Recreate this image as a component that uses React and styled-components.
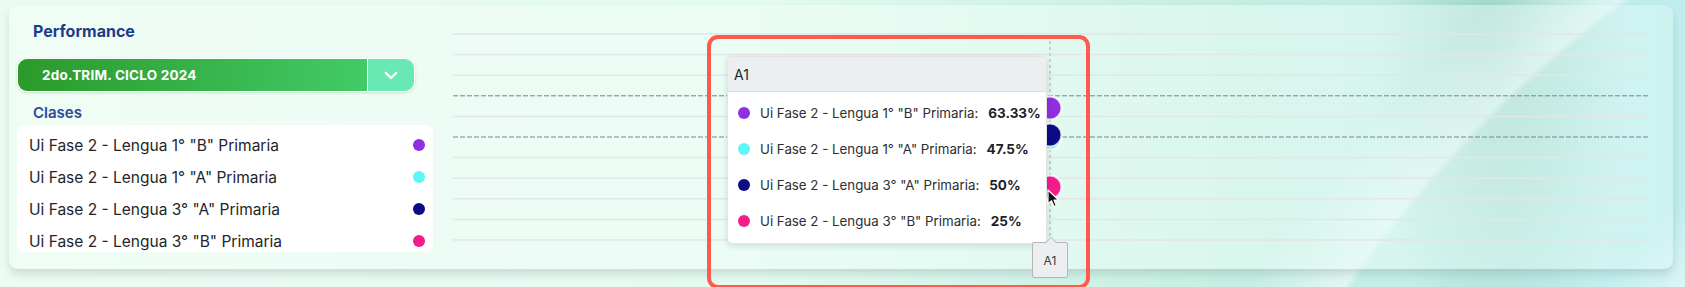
import React from "react";
import styled, { createGlobalStyle } from "styled-components";

const GlobalStyle = createGlobalStyle`
  html, body {
    margin: 0;
    padding: 0;
  }
  body {
    font-family: Inter, "Noto Sans", "Liberation Sans", sans-serif;
    color: #1f2328;
  }
`;

const Page = styled.div`
  width: 1685px;
  height: 287px;
  box-sizing: border-box;
  padding: 5px 12px 0 9px;
  overflow: hidden;
  background:
    radial-gradient(circle at 2350px 980px, rgba(255, 255, 255, 0) 1215px, rgba(255, 255, 255, 0.5) 1222px, rgba(255, 255, 255, 0) 1300px),
    radial-gradient(circle at 2300px 900px, rgba(255, 255, 255, 0) 860px, rgba(255, 255, 255, 0.45) 866px, rgba(255, 255, 255, 0) 930px),
    radial-gradient(circle at 2200px 850px, rgba(255, 255, 255, 0) 690px, rgba(255, 255, 255, 0.4) 696px, rgba(255, 255, 255, 0) 760px),
    radial-gradient(ellipse 170px 420px at 1500px 60px, rgba(110, 180, 150, 0.45), rgba(110, 180, 150, 0) 75%),
    linear-gradient(90deg, #ecfcf3 0%, #e4fbf0 45%, #c6efe2 72%, #bfeeee 100%);
`;

const Card = styled.div`
  display: flex;
  height: 264px;
  box-sizing: border-box;
  padding: 0 25px 0 8px;
  gap: 20px;
  border-radius: 9px;
  background: linear-gradient(90deg, rgba(240, 253, 245, 0.85) 0%, rgba(236, 253, 246, 0.65) 55%, rgba(230, 250, 248, 0.4) 100%);
  box-shadow: 0 5px 8px rgba(120, 140, 150, 0.28);
`;

const Sidebar = styled.div`
  width: 416px;
  flex: none;
  display: flex;
  flex-direction: column;
  padding-top: 16px;
`;

const Title = styled.div`
  padding-left: 16px;
  font-size: 16px;
  font-weight: 700;
  color: #1e3a8a;
  line-height: 20px;
`;

const Select = styled.div`
  margin-top: 17px;
  height: 34px;
  width: 398px;
  display: flex;
  box-sizing: border-box;
  border: 1px solid #ffffff;
  border-radius: 10px;
  overflow: hidden;
  box-shadow: 0 1px 3px rgba(40, 120, 60, 0.2);
`;

const SelectValue = styled.div`
  flex: 1;
  display: flex;
  align-items: center;
  padding-left: 24px;
  background: linear-gradient(90deg, #2b9a29 0%, #36b24a 50%, #42cb66 100%);
  color: #ffffff;
  font-size: 13.5px;
  font-weight: 700;
  letter-spacing: 0.2px;
`;

const SelectToggle = styled.div`
  width: 46px;
  display: flex;
  align-items: center;
  justify-content: center;
  border-left: 1px solid #ffffff;
  background: #68e9b3;
`;

const Subtitle = styled.div`
  margin-top: 12px;
  padding-left: 16px;
  font-size: 15px;
  font-weight: 600;
  color: #2a4a9b;
  line-height: 18px;
`;

const Legend = styled.div`
  margin-top: 3px;
  background: #ffffff;
  border-radius: 8px;
  padding: 4px 0 0;
  height: 127px;
  box-sizing: border-box;
  overflow: hidden;
`;

const LegendRow = styled.div`
  height: 32px;
  display: flex;
  align-items: center;
  justify-content: space-between;
  padding: 0 8px 0 12px;
  font-size: 15.5px;
  color: #23262b;
`;

const Dot = styled.span`
  width: 12px;
  height: 12px;
  border-radius: 50%;
  background: ${(p) => p.$color};
  flex: none;
`;

const ChartArea = styled.div`
  flex: 1;
  position: relative;
`;

const ChartSvg = styled.svg`
  display: block;
`;

const Tooltip = styled.div`
  position: absolute;
  left: 274px;
  top: 51px;
  width: 318px;
  background: #ffffff;
  border: 1px solid #e3e3e3;
  border-radius: 5px;
  box-shadow: 0 2px 6px rgba(0, 0, 0, 0.12);
  overflow: hidden;
  font-size: 13.3px;
`;

const TooltipHeader = styled.div`
  height: 34px;
  display: flex;
  align-items: center;
  padding-left: 6px;
  background: #eceff1;
  border-bottom: 1px solid #dddddd;
  color: #222;
  font-size: 14px;
`;

const TooltipBody = styled.div`
  padding: 3px 0 4px;
`;

const TooltipRow = styled.div`
  height: 36px;
  display: flex;
  align-items: center;
  padding-left: 10px;
  color: #2b2e33;
  white-space: nowrap;
`;

const TooltipLabel = styled.span`
  margin-left: 10px;
`;

const TooltipValue = styled.b`
  margin-left: 10px;
  font-size: 13.5px;
  font-weight: 700;
  color: #1f2328;
`;

const AxisLabel = styled.div`
  position: absolute;
  left: 579px;
  top: 237px;
  width: 36px;
  height: 36px;
  box-sizing: border-box;
  display: flex;
  align-items: center;
  justify-content: center;
  background: #eceff1;
  border: 1px solid #b6b6b6;
  border-radius: 2px;
  font-size: 12px;
  color: #373d3f;

  &::before {
    content: "";
    position: absolute;
    top: -6px;
    left: 12px;
    border: 6px solid transparent;
    border-top: 0;
    border-bottom-color: #b6b6b6;
  }
  &::after {
    content: "";
    position: absolute;
    top: -5px;
    left: 13px;
    border: 5px solid transparent;
    border-top: 0;
    border-bottom-color: #eceff1;
  }
`;

const Highlight = styled.div`
  position: absolute;
  left: 254px;
  top: 30px;
  width: 383px;
  height: 254px;
  box-sizing: border-box;
  border: 4px solid #ff5b4d;
  border-radius: 11px;
  pointer-events: none;
`;

const Cursor = styled.svg`
  position: absolute;
  left: 594px;
  top: 184px;
`;

const series = [
  { name: 'Ui Fase 2 - Lengua 1° "B" Primaria', color: "#8f2fe0", value: "63.33%", cy: 103 },
  { name: 'Ui Fase 2 - Lengua 1° "A" Primaria', color: "#5ef6f6", value: "47.5%", cy: 133 },
  { name: 'Ui Fase 2 - Lengua 3° "A" Primaria', color: "#0c0b87", value: "50%", cy: 130 },
  { name: 'Ui Fase 2 - Lengua 3° "B" Primaria', color: "#f41b8c", value: "25%", cy: 182 },
];

const gridLines = Array.from({ length: 11 }, (_, i) => 29 + i * 20.6);
const dashed = [3, 5];

const ChevronDown = () => (
  <svg width="18" height="18" viewBox="0 0 24 24" fill="none" stroke="#ffffff" strokeWidth="3" strokeLinecap="round" strokeLinejoin="round">
    <path d="M5 9l7 7 7-7" />
  </svg>
);

const drawOrder = [1, 2, 0, 3];

const App = () => {
  return (
    <>
      <GlobalStyle />
      <Page>
        <Card>
          <Sidebar>
            <Title>Performance</Title>
            <Select>
              <SelectValue>2do.TRIM. CICLO 2024</SelectValue>
              <SelectToggle>
                <ChevronDown />
              </SelectToggle>
            </Select>
            <Subtitle>Clases</Subtitle>
            <Legend>
              {series.map((s) => (
                <LegendRow key={s.name}>
                  <span>{s.name}</span>
                  <Dot $color={s.color} />
                </LegendRow>
              ))}
            </Legend>
          </Sidebar>
          <ChartArea>
            <ChartSvg width="1195" height="264">
              {gridLines.map((y, i) =>
                dashed.includes(i) ? (
                  <line key={i} x1="0" x2="1195" y1={y} y2={y} stroke="#7d8488" strokeWidth="1" strokeDasharray="5 2" />
                ) : (
                  <line key={i} x1="0" x2="1195" y1={y} y2={y} stroke="#e2e6e4" strokeWidth="1.5" />
                )
              )}
              <line x1="597" x2="597" y1="30" y2="238" stroke="#b9c7c4" strokeWidth="1.5" strokeDasharray="3 3" />
              {drawOrder.map((i) => (
                <circle key={i} cx="597" cy={series[i].cy} r="11.5" fill={series[i].color} stroke="#ffffff" strokeOpacity="0.8" strokeWidth="2" />
              ))}
            </ChartSvg>
            <Tooltip>
              <TooltipHeader>A1</TooltipHeader>
              <TooltipBody>
                {series.map((s) => (
                  <TooltipRow key={s.name}>
                    <Dot $color={s.color} />
                    <TooltipLabel>{s.name}:</TooltipLabel>
                    <TooltipValue>{s.value}</TooltipValue>
                  </TooltipRow>
                ))}
              </TooltipBody>
            </Tooltip>
            <AxisLabel>A1</AxisLabel>
            <Highlight />
            <Cursor width="14" height="20" viewBox="0 0 14 20">
              <path d="M1 1 L1 15 L4.5 11.8 L7 17.5 L9.3 16.5 L6.9 11 L11.5 11 Z" fill="#111" stroke="#fff" strokeWidth="1.2" strokeLinejoin="round" />
            </Cursor>
          </ChartArea>
        </Card>
      </Page>
    </>
  );
};

export default App;
